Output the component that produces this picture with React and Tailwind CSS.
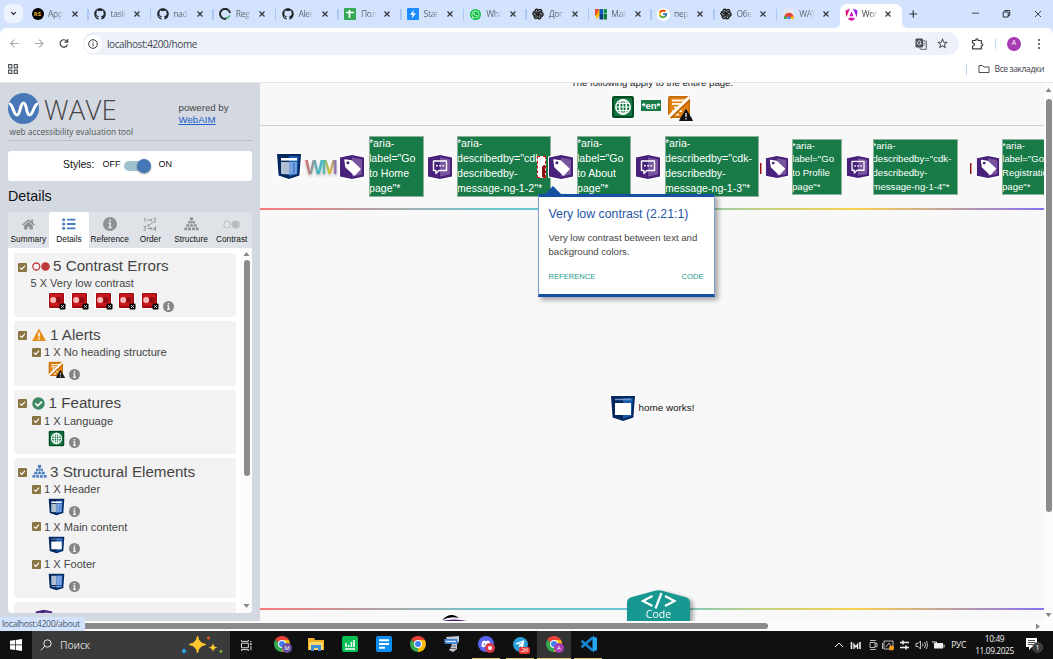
import React from 'react';
import { FaGithub, FaWhatsapp, FaDiscord, FaTelegramPlane, FaHome } from 'react-icons/fa';
import { FcGoogle } from 'react-icons/fc';
import { TbBrandOpenai } from 'react-icons/tb';
import { VscVscode } from 'react-icons/vsc';
import { MdStarBorder } from 'react-icons/md';

const SEGOE = "font-['Open_Sans','Noto_Sans',sans-serif]";

/* ---------- favicons ---------- */
const Rs = () => (
  <span className="flex h-[12px] w-[12px] items-center justify-center rounded-full bg-black text-[6px] font-bold text-[#f2b632]">RS</span>
);
const GitCheck = () => (
  <svg viewBox="0 0 12 12" className="h-[12px] w-[12px]">
    <path d="M7 10.800A5 5 0 1 1 11 5" fill="none" stroke="#24292f" strokeWidth="2" />
    <path d="M6.500 9l1.500 1.500 3-3" fill="none" stroke="#3fb06b" strokeWidth="1.400" />
  </svg>
);
const Sheets = () => (
  <svg viewBox="0 0 12 12" className="h-[12px] w-[12px]">
    <rect width="12" height="12" rx="1" fill="#34a853" />
    <path d="M2 4.500h8M5.500 2v8" stroke="#fff" strokeWidth="1.700" />
  </svg>
);
const Bolt = () => (
  <svg viewBox="0 0 12 12" className="h-[12px] w-[12px]">
    <rect width="12" height="12" rx="1" fill="#1a8cff" />
    <path d="M7 1.800L3 6.800h2.600L4.800 10.400 9 5.300H6.200z" fill="#fff" />
  </svg>
);
const Whats = () => (
  <span className="flex h-[11px] w-[11px] items-center justify-center rounded-full bg-[#0bc144] text-[9px] text-white"><FaWhatsapp /></span>
);
const Mat = () => (
  <svg viewBox="0 0 12 12" className="h-[12px] w-[12px]">
    <path d="M0 1h4l-1 5-3 2z" fill="#f04a2a" />
    <path d="M5 1v6l-4 4.500 0-4z" fill="#fbbc04" />
    <rect x="4.500" y="1" width="3.500" height="5" fill="#1557c0" /><rect x="8.500" y="1" width="3.500" height="4.500" rx="1" fill="#129447" />
    <rect x="4.500" y="6" width="3.500" height="5.500" fill="#103e85" /><rect x="8.500" y="6" width="3.500" height="5.500" fill="#0d7a3a" />
  </svg>
);
const Google = () => (
  <span className="flex h-[13px] w-[13px] items-center justify-center rounded-full bg-white text-[10px]"><FcGoogle /></span>
);
const Store = () => (
  <svg viewBox="0 0 12 12" className="h-[12px] w-[12px]">
    <rect x="1" y="0.500" width="10" height="10.500" rx="1" fill="#e6e8ec" />
    <path d="M1.500 9a4.500 4 0 0 1 9-0.500L8 10z" fill="#ea4335" />
    <path d="M1 11V8l3 1v2z" fill="#34a853" />
    <path d="M8 8.500h3V11H7z" fill="#fbbc04" />
    <circle cx="6" cy="9.800" r="1.500" fill="#4285f4" />
  </svg>
);
const Angular = () => (
  <svg viewBox="0 0 12 12" className="h-[13px] w-[13px]">
    <defs>
      <linearGradient id="ang" x1="0" y1="0.600" x2="1" y2="0.200">
        <stop offset="0" stopColor="#f0104c" />
        <stop offset="0.500" stopColor="#d516c4" />
        <stop offset="1" stopColor="#7a1cff" />
      </linearGradient>
    </defs>
    <path d="M7.300 0.500l4.200 1.800-.6 6.300zM4.700 0.500L.5 2.300l.6 6.300zM9 10.300L6 12l-3-1.700.6-1.400h4.800zM6 3l1.900 4.700H4.100z" fill="url(#ang)" />
  </svg>
);
const Gh = () => <FaGithub className="h-[12px] w-[12px] text-[#24292f]" />;
const Ai = () => <TbBrandOpenai strokeWidth="2.800" className="h-[12px] w-[12px] text-[#222]" />;

const TABS = [
  [Rs, 'App'], [Gh, 'task'], [Gh, 'nad'], [GitCheck, 'Reg'], [Gh, 'Aler'], [Sheets, 'Пол'], [Bolt, 'Stat'],
  [Whats, 'Wha'], [Ai, 'Дог'], [Mat, 'Mat'], [Google, 'пер'], [Ai, 'Обе'], [Store, 'WAV'], [Angular, 'Wor'],
];

const Cross = ({ className }) => (
  <svg viewBox="0 0 8 8" className={className}><path d="M1.500 1.500l5 5M6.500 1.500l-5 5" stroke="currentColor" strokeWidth="1.200" /></svg>
);

function Tab({ Icon, label, active, last }) {
  return (
    <div className={`relative flex h-[24px] w-[62.6px] shrink-0 items-center pb-[4px] ${active ? 'rounded-t-[7px] bg-white' : ''}`}>
      {active && (
        <svg viewBox="0 0 74 6" className="absolute -left-[6px] bottom-0 h-[6px] w-[74.600px]" preserveAspectRatio="none">
          <path d="M0 6Q6 6 6 0V6zM74 6Q68 6 68 0V6z" fill="#fff" />
        </svg>
      )}
      <span className="ml-[5px] flex w-[13px] justify-center"><Icon /></span>
      <span className={`ml-[4px] w-[15px] overflow-hidden whitespace-nowrap text-[8.500px] tracking-[-0.300px] text-[#41454c] ${active ? '' : 'opacity-80'} [mask-image:linear-gradient(to_right,black_55%,transparent_105%)]`}>{label}</span>
      <Cross className="ml-[7.500px] h-[8px] w-[8px] text-[#30343a]" />
      {!active && !last && <span className="ml-auto h-[11px] w-[1.500px] bg-[#a9c7f5]" />}
    </div>
  );
}

function Browser() {
  return (
    <div className={`${SEGOE} h-[83px] shrink-0 bg-[#d3e3fd]`}>
      <div className="flex h-[28px] items-end">
        <div className="mb-[5px] ml-[4px] flex h-[19px] w-[19px] items-center justify-center rounded-[6px] bg-[#ecf2fe]">
          <svg viewBox="0 0 8 8" className="h-[7px] w-[7px]"><path d="M1.500 2.500L4 5l2.500-2.500" fill="none" stroke="#222" strokeWidth="1.400" /></svg>
        </div>
        <div className="ml-[3px] flex">
          {TABS.map(([I, l], i) => <Tab key={i} Icon={I} label={l} active={i === 13} last={i === 12} />)}
        </div>
        <svg viewBox="0 0 140 28" className="h-[28px] w-[140px]" fill="none" stroke="#30343a">
          <path d="M7.500 14h7.500M11.200 10.200v7.500" strokeWidth="1.100" />
          <path d="M70 13.200h7" strokeWidth="0.900" />
          <path d="M101.200 12h5v5h-5zM102.700 12v-1.500h5v5H106" strokeWidth="1" />
          <path d="M133 11l6 6M139 11l-6 6" strokeWidth="0.900" />
        </svg>
      </div>
      <div className="h-[55px] rounded-t-[6px] border-b border-[#e4e6e9] bg-white">
        <div className="flex h-[31px] items-center">
          <svg viewBox="0 0 83 31" className="h-[31px] w-[83px]" fill="none">
            <path d="M18.800 15.500h-7.800M14.400 11.700l-3.800 3.800 3.800 3.800" stroke="#a5a8ac" strokeWidth="1.100" />
            <path d="M35 15.500h7.800M39.200 11.700l3.800 3.800-3.800 3.800" stroke="#a5a8ac" strokeWidth="1.100" />
            <path d="M66.800 13.200a3.700 3.700 0 1 0 .6 3.300M67.700 11v3.200h-3.200" stroke="#3c4043" strokeWidth="1.200" />
          </svg>
          <div className="flex h-[23px] w-[876px] items-center rounded-full bg-[#ecf1fa] pl-[1px]">
            <span className="flex h-[18px] w-[18px] items-center justify-center rounded-full bg-white">
              <svg viewBox="0 0 10 10" className="h-[10px] w-[10px]" fill="none" stroke="#33373c"><circle cx="5" cy="5" r="4.300" /><path d="M5 4.500v2.700M5 2.600v1.100" /></svg>
            </span>
            <span className="ml-[5px] mt-px text-[10px] tracking-[-0.430px] text-[#45494f]">localhost:4200/home</span>
            <svg viewBox="0 0 12 12" className="ml-auto h-[12px] w-[12px]">
              <rect x="0.500" y="0.500" width="7.500" height="9" rx="1" fill="#4a4e54" />
              <path d="M8 3h3.300v8.300H5.500L4.500 9.500" fill="none" stroke="#5f6368" />
              <path d="M6 3.800A2 2 0 1 0 6 6V5H4.500" fill="none" stroke="#fff" strokeWidth="0.800" />
              <path d="M7.500 5.500h3M9 4.500v1M10 5.500L7.500 8.500M8 6.500l2 2" fill="none" stroke="#777" strokeWidth="0.700" />
            </svg>
            <MdStarBorder className="ml-[9px] mr-[10px] h-[13px] w-[13px] text-[#3c4043]" />
          </div>
          <svg viewBox="0 0 13 13" className="ml-[12px] h-[13px] w-[13px]" fill="none" stroke="#3c4043" strokeWidth="1.200"><path d="M1.500 3.500h3.200V3a1.200 1.200 0 0 1 2.400 0v.5h3.200v3h.3a1.200 1.200 0 0 1 0 2.400h-.3v3h-8.800V9.200q2-.2 2-1.700t-2-1.700z" /></svg>
          <span className="ml-[11px] h-[11px] w-px bg-[#c5dafb]" />
          <span className="ml-[11px] flex h-[14px] w-[14px] items-center justify-center rounded-full bg-[#a63cb4] text-[7px] text-white">A</span>
          <svg viewBox="0 0 4 12" className="ml-[16px] h-[12px] w-[4px]" fill="#3c4043"><circle cx="2" cy="2" r="1" /><circle cx="2" cy="6" r="1" /><circle cx="2" cy="10" r="1" /></svg>
        </div>
        <div className="flex h-[20px] items-center">
          <svg viewBox="0 0 10 10" className="ml-[8px] h-[10px] w-[10px]" fill="none" stroke="#55595e" strokeWidth="1.200"><path d="M.6.6h3.200v3.200H.6zM6.200.6h3.200v3.200H6.200zM.6 6.200h3.200v3.200H.6zM6.200 6.200h3.200v3.200H6.200z" /></svg>
          <span className="ml-auto h-[11px] w-px bg-[#bdd4fa]" />
          <svg viewBox="0 0 12 10" className="ml-[11px] h-[10px] w-[12px]" fill="none" stroke="#4a4e54"><path d="M1 8.500v-7h3.500L6 3h5v5.500z" /></svg>
          <span className="ml-[5px] mr-[9px] text-[8.600px] tracking-[-0.430px] text-[#3f4349]">Все закладки</span>
        </div>
      </div>
    </div>
  );
}

/* ---------- WAVE icons ---------- */
const Check = () => (
  <svg viewBox="0 0 9 9" className="h-[9px] w-[9px] shrink-0"><rect width="9" height="9" rx="1" fill="#8a7543" /><path d="M2 4.600l1.800 1.800L7 2.700" fill="none" stroke="#fff" strokeWidth="1.200" /></svg>
);
const Info = ({ className }) => (
  <svg viewBox="0 0 12 12" className={`shrink-0 ${className}`}><circle cx="6" cy="6" r="6" fill="#858585" /><path d="M6 2.200v1.700M4.700 5.300H6V9M4.500 9h3" stroke="#f2f2f2" strokeWidth="1.500" fill="none" /></svg>
);
const ContrastIcon = () => (
  <svg viewBox="0 0 18 18" className="h-[18px] w-[18px] shrink-0">
    <rect width="17" height="17" rx="2" fill="#fff" /><rect x="1" y="1" width="15" height="15" rx="1" fill="#9e0b0f" /><rect x="2" y="2" width="12.500" height="12" fill="#c9171e" />
    <circle cx="10.500" cy="8" r="3" fill="#8f0d12" /><circle cx="5.200" cy="8" r="3" fill="#fbb9bb" />
    <rect x="11.500" y="11.500" width="6" height="6" rx="1" fill="#000" /><path d="M13.200 13.200l2.600 2.600M15.800 13.200l-2.600 2.600" stroke="#fff" strokeWidth="0.900" />
  </svg>
);
const HeadingIcon = ({ className }) => (
  <svg viewBox="0 0 26 26" className={`shrink-0 ${className}`}>
    <rect width="24" height="24" rx="3" fill="#fff" /><rect x="1" y="1" width="22" height="22" rx="2" fill="#c46a04" /><rect x="2.500" y="2.500" width="19" height="19" fill="#e08214" />
    <path d="M5 5.500h13M5 9h10M7 12.500h9M5 16h10M4 19.500h8" stroke="#fff3e0" strokeWidth="2.200" /><path d="M3 22L22 4" stroke="#c46a04" strokeWidth="4.500" /><path d="M1 22.500L22.500 2" stroke="#fff" strokeWidth="2.800" />
    <path d="M19 14.500L25.500 25.500h-13z" fill="#111" stroke="#111" strokeLinejoin="round" /><path d="M19 18v4M19 23v1.500" stroke="#fff" strokeWidth="1.200" />
  </svg>
);
const Globe = ({ className }) => (
  <svg viewBox="0 0 24 24" className={`shrink-0 ${className}`}>
    <rect width="24" height="24" rx="3" fill="#fff" /><rect x="1" y="1" width="22" height="22" rx="2" fill="#004d25" /><rect x="3" y="3" width="18" height="18" rx="1" fill="#12753f" />
    <g fill="none" stroke="#fff" strokeWidth="1.500"><circle cx="12" cy="12" r="7.200" /><ellipse cx="12" cy="12" rx="3.500" ry="7.200" /><path d="M12 5v14M5 12h14M6 8.500h12M6 15.500h12" strokeWidth="1.100" /></g>
  </svg>
);
const Shield = ({ type, className }) => (
  <svg viewBox="0 0 26 27" className={`shrink-0 ${className}`}>
    <path d="M0 0h26l-1.500 23.500L13 27 1.500 23.500z" fill="#fff" />
    <path d="M1 1h24l-1.600 21.600L13 26 2.600 22.600z" fill="#03265d" /><path d="M13 3h9.800l-1.400 18L13 23.800z" fill="#1b5dad" />
    {type === 'header' && <><path d="M5 5h16v2.600H5z" fill="#fff" /><path d="M5 9h8v12.500L5 21z" fill="#b1bfd3" /><path d="M13 9h7.800v12L13 21.500z" fill="#79a3e0" /><path d="M17 10h2v10h-2z" fill="#4d86d4" /></>}
    {type === 'main' && <><path d="M5 4.500h16" stroke="#6f94c6" strokeWidth="1.500" /><path d="M5 8h16v12H5z" fill="#fff" /></>}
    {type === 'footer' && <><path d="M5 4h8v14H5z" fill="#b1bfd3" /><path d="M13 4h8v14h-8z" fill="#79a3e0" /><path d="M5.500 20.500h15" stroke="#a9bcd8" strokeWidth="1.200" /></>}
  </svg>
);
const Hex = ({ kind, className }) => (
  <svg viewBox="0 0 26 26" className={`relative shrink-0 ${className}`}>
    <path d="M0 2.500L13 0l13 2.500v21L13 26 0 23.500z" fill="#fff" /><path d="M1 3.500L13 1l12 2.500v19L13 25 1 22.500z" fill="#48217a" /><path d="M13 3.500l10 2v15l-10 2z" fill="#7a559f" />
    {kind === 'tag'
      ? <><path d="M6 6l6.500 1 8.500 8-5.500 6L7 13z" fill="#fff" stroke="#fff" strokeWidth="1.500" strokeLinejoin="round" /><circle cx="8.900" cy="8.800" r="1.500" fill="#48217a" /></>
      : <><path d="M6.500 7h13v9.500H12l-3 3v-3H6.500z" fill="none" stroke="#fff" strokeWidth="1.400" strokeLinejoin="round" /><path d="M9 11.800h1.700M12.200 11.800h1.700M15.400 11.800h1.700" stroke="#fff" strokeWidth="1.600" /></>}
  </svg>
);
const Tree = ({ className }) => (
  <svg viewBox="0 0 16 14" className={`shrink-0 ${className}`}>
    <path d="M8 2v3M4.500 8l1.500-3h4l1.500 3M2 12l2-4M6.500 12L4.500 8M9.500 12l2-4M14 12l-2-4M8 5v3" stroke="currentColor" strokeWidth="0.700" fill="none" />
    <g fill="currentColor"><rect x="6.300" y="0" width="3.400" height="3" /><rect x="4.300" y="4" width="2.800" height="2.200" /><rect x="8.900" y="4" width="2.800" height="2.200" /><rect x="2.500" y="7.300" width="3" height="2.500" /><rect x="6.500" y="7.300" width="3" height="2.500" /><rect x="10.500" y="7.300" width="3" height="2.500" /><rect x="0.300" y="11" width="3.200" height="2.600" /><rect x="4.500" y="11" width="3" height="2.600" /><rect x="8.500" y="11" width="3" height="2.600" /><rect x="12.500" y="11" width="3.200" height="2.600" /></g>
  </svg>
);

/* ---------- sidebar ---------- */
const NAV = [
  ['Summary', <FaHome className="h-[13px] w-[13px]" />],
  ['Details', <svg viewBox="0 0 14 12" className="h-[12px] w-[14px] text-[#4a7cc0]" fill="currentColor"><circle cx="1.700" cy="1.700" r="1.500" /><circle cx="1.700" cy="6" r="1.500" /><circle cx="1.700" cy="10.300" r="1.500" /><path d="M5 .8h8.500v1.800H5zM5 5.100h8.500v1.800H5zM5 9.400h8.500v1.800H5z" /></svg>],
  ['Reference', <svg viewBox="0 0 12 12" className="h-[14px] w-[14px]"><circle cx="6" cy="6" r="6" fill="currentColor" /><path d="M6 2.200v1.600M4.800 5.200H6V9M4.600 9h3" stroke="#dfe3e8" strokeWidth="1.400" fill="none" /></svg>],
  ['Order', <svg viewBox="0 0 14 14" className="h-[14px] w-[14px]" fill="none" stroke="currentColor" strokeWidth="0.900"><path d="M1 1.500L2 1v4M4 3h5M7.500 1.500L9 3 7.500 4.500M10.500 1.300h2.300v1L10.500 5H13M10 5.500L5 9M5 7v2h2M.5 9.500H3L1.500 11.500 3 12.500.5 13.500M4.500 11.500H9M7.500 10L9 11.500 7.500 13M12.500 14V9.500l-2.300 3H13" /></svg>],
  ['Structure', <Tree className="h-[14px] w-[15px]" />],
  ['Contrast', <svg viewBox="0 0 17 9" className="h-[9px] w-[17px] text-[#b9bbbf]"><circle cx="4.300" cy="4.500" r="3.500" fill="none" stroke="currentColor" /><circle cx="12.700" cy="4.500" r="4" fill="currentColor" /></svg>],
];

function Card({ icon, title, className, titleClass, children }) {
  return (
    <div className={`shrink-0 rounded-[3px] bg-[#f2f2f2] text-[#454545] ${className}`}>
      <div className="flex h-[27px] items-center pl-[4px]">
        <span className="mt-px"><Check /></span>
        <span className="ml-[5px] flex items-center">{icon}</span>
        <span className={`whitespace-nowrap text-[15.200px] ${titleClass}`}>{title}</span>
      </div>
      {children}
    </div>
  );
}
function Item({ label, children }) {
  return (
    <div className="h-[37.400px]">
      <div className="flex h-[8px] items-center pl-[18px]"><Check /><span className="ml-[3px] whitespace-nowrap text-[11.100px]">{label}</span></div>
      <div className="flex h-[24px] items-start pl-[34px] pt-[5px]">{children}<Info className="ml-[4px] mt-[7.500px] h-[11px] w-[11px]" /></div>
    </div>
  );
}

function Sidebar() {
  return (
    <div className="flex h-full w-[260px] shrink-0 flex-col overflow-hidden bg-[#d4d9e1] px-[8px]">
      <div className="flex h-[57.500px] shrink-0 justify-between border-b border-[#b9bdc4]">
        <div className="pt-[10px]">
          <div className="flex h-[31px] items-center">
            <svg viewBox="0 0 31 31" className="h-[31px] w-[31px]"><circle cx="15.500" cy="15.500" r="15.500" fill="#4878b8" /><path d="M1 11c4-1 4 11 8 11 3.500 0 3-12 6.500-12S18 22 21.500 22c4 0 4.500-12 8.500-11" fill="none" stroke="#fff" strokeWidth="3" /></svg>
            <span className="ml-[5px] mt-[2px] font-['Open_Sans',sans-serif] text-[27.500px] font-light leading-none tracking-[0.200px] text-[#454545]">WAVE</span>
          </div>
          <div className="ml-[1.500px] mt-[2px] whitespace-nowrap font-['Open_Sans',sans-serif] text-[8.300px] leading-[12px] text-[#555]">web accessibility evaluation tool</div>
        </div>
        <div className="w-[73.500px] whitespace-nowrap pt-[19px] text-[9.700px] leading-[11.500px] text-[#444]">powered by<br /><span className="text-[#2060c8] underline">WebAIM</span></div>
      </div>
      <div className="mt-[10.500px] flex h-[30px] shrink-0 items-center rounded-[3px] bg-white pb-[2px] text-[#111]">
        <span className="ml-[55px] text-[10.500px]">Styles:</span>
        <span className="ml-[8px] text-[9px]">OFF</span>
        <span className="ml-[3px] mt-[2px] flex h-[10px] w-[27px] items-center justify-end rounded-full bg-[#9fc2cd]"><span className="h-[13.500px] w-[13.500px] rounded-full bg-[#4576b5] shadow-[0_1px_2px_rgba(0,0,0,.4)]" /></span>
        <span className="ml-[8px] text-[9px]">ON</span>
      </div>
      <div className="h-[31px] shrink-0 pt-[4px] text-[14.300px] leading-[22px] text-[#111]">Details</div>
      <div className="flex h-[36px] shrink-0 overflow-hidden rounded-t-[4px] bg-[#dfe3e8]">
        {NAV.map(([l, ic], i) => (
          <div key={l} className={`flex flex-1 flex-col items-center text-[#8f9193] ${i === 1 ? 'rounded-t-[3px] bg-white' : ''}`}>
            <span className="flex h-[22px] items-center pt-[2px]">{ic}</span>
            <span className="text-[8.300px] leading-[11px] text-[#111]">{l}</span>
          </div>
        ))}
      </div>
      <div className="flex h-[365px] shrink-0 overflow-hidden rounded-b-[4px] bg-white">
        <div className="flex w-[228px] flex-col gap-[4.200px] pl-[6px] pt-[5px]">
          <Card className="h-[64.300px]" title="5 Contrast Errors" titleClass="ml-[3px]" icon={<svg viewBox="0 0 18 9" className="h-[9px] w-[18px]"><circle cx="4.300" cy="4.500" r="3.500" fill="none" stroke="#c03a3a" strokeWidth="1.300" /><circle cx="13.500" cy="4.500" r="4.300" fill="#c03a3a" /></svg>}>
            <div className="h-[8px] whitespace-nowrap pl-[16.500px] text-[11px] leading-[7px]">5 X Very low contrast</div>
            <div className="flex gap-[5.300px] pl-[34px] pt-[4px]">{[0, 1, 2, 3, 4].map((i) => <ContrastIcon key={i} />)}<Info className="-ml-[1px] mt-[8.500px] h-[11px] w-[11px]" /></div>
          </Card>
          <Card className="h-[64.300px]" title="1 Alerts" titleClass="ml-[4px]" icon={<svg viewBox="0 0 14 13" className="h-[13px] w-[14px]"><path d="M7 .5L14 13H0z" fill="#e8901e" /><path d="M7 4.500v4M7 9.800v1.600" stroke="#fff" strokeWidth="1.500" /></svg>}>
            <Item label="1 X No heading structure"><HeadingIcon className="h-[17px] w-[17px]" /></Item>
          </Card>
          <Card className="h-[64.300px]" title="1 Features" titleClass="ml-[3.500px]" icon={<svg viewBox="0 0 14 14" className="h-[13px] w-[13px]"><circle cx="7" cy="7" r="6.700" fill="#3f8a62" /><path d="M3.500 6.800l2.700 2.700 4.500-4.500" fill="none" stroke="#fff" strokeWidth="1.700" /></svg>}>
            <Item label="1 X Language"><Globe className="h-[17px] w-[17px]" /></Item>
          </Card>
          <Card className="h-[139.300px]" title="3 Structural Elements" titleClass="ml-[3px]" icon={<Tree className="h-[13px] w-[15px] text-[#4a7cc0]" />}>
            <Item label="1 X Header"><Shield type="header" className="h-[18px] w-[17px]" /></Item>
            <Item label="1 X Main content"><Shield type="main" className="h-[18px] w-[17px]" /></Item>
            <Item label="1 X Footer"><Shield type="footer" className="h-[18px] w-[17px]" /></Item>
          </Card>
          <div className="h-[20px] shrink-0 rounded-[3px] bg-[#f2f2f2] pl-[21px] pt-[7px]"><Hex kind="tag" className="h-[18px] w-[18px]" /></div>
        </div>
        <div className="ml-[5px] flex w-[11px] flex-col items-center bg-[#fcfcfc] pt-[4px]">
          <svg viewBox="0 0 6 4" className="h-[4px] w-[7px]"><path d="M3 0l3 4H0z" fill="#888" /></svg>
          <span className="mt-[4px] h-[216px] w-[6px] rounded-full bg-[#8b8b8b]" />
          <svg viewBox="0 0 6 4" className="mb-[5px] mt-auto h-[4px] w-[7px]"><path d="M3 4l3-4H0z" fill="#888" /></svg>
        </div>
      </div>
    </div>
  );
}

/* ---------- page ---------- */
const Note = ({ lines, small, className }) => (
  <div className={`shrink-0 whitespace-pre bg-[#177a47] text-white outline outline-[#8ab59c] -outline-offset-1 ${small ? 'h-[56px] text-[9.600px] leading-[13.800px]' : 'h-[61px] text-[10.600px] leading-[15.100px]'} ${className}`}>
    {lines.map((l) => <div key={l}>{l}</div>)}
  </div>
);
const RED = 'shrink-0 border-r border-[#d88] bg-[#8d1015]';
const RAINBOW = 'bg-[linear-gradient(to_right,#ff5a5a_0%,#45c0c8_30%,#3fb8c8_50%,#b6c766_64%,#f9c722_76%,#6a50f0_100%)]';

function Page() {
  return (
    <div className="relative flex h-full min-w-0 flex-1 flex-col overflow-hidden bg-[#f8f8f8]">
      <div className="flex h-[42.500px] shrink-0 flex-col items-center border-b border-[#cfcfcf]">
        <div className="-mt-[6px] h-[12px] whitespace-nowrap text-[9.600px] leading-[12px] text-[#222]">The following apply to the entire page.</div>
        <div className="mt-[6px] flex items-start">
          <Globe className="h-[24px] w-[24px]" />
          <span className="ml-[6px] mt-[5px] h-[11px] w-[20px] bg-[#177a47] text-center text-[9.500px] font-bold leading-[11px] text-white">*en*</span>
          <HeadingIcon className="ml-[6px] h-[26px] w-[26px]" />
        </div>
      </div>
      <div className="flex h-[82px] shrink-0 items-center text-[#111]">
        <Shield type="header" className="ml-[16px] h-[27px] w-[26px]" />
        <span className="relative ml-[3px] w-[33px] shrink-0 drop-shadow-[0_2px_1px_rgba(0,0,0,.2)]">
          <span className="block bg-[linear-gradient(to_right,#e56a6a,#45b8c4_40%,#48b8c0_55%,#e0c020_75%,#6a50f0)] bg-clip-text text-[19.500px] font-bold leading-[22px] tracking-[-1.800px] text-transparent">WM</span>
        </span>
        <Hex kind="tag" className="ml-[1px] h-[26px] w-[26px]" />
        <Note className="ml-[4px] w-[54.500px]" lines={['*aria-', 'label="Go', 'to Home', 'page"*']} />
        <Hex kind="chat" className="ml-[3.500px] h-[26px] w-[26px]" />
        <Note className="ml-[4px] w-[93.500px]" lines={['*aria-', 'describedby="cdk-', 'describedby-', 'message-ng-1-2"*']} />
        <span className="relative -ml-[14px] flex h-[22px] w-[9px] shrink-0 justify-end border border-dashed border-[#e11] bg-white"><span className="mt-[8px] w-[3px] rounded-tl-[3px] bg-[#8d1015]" /></span>
        <Hex kind="tag" className="ml-[2px] h-[26px] w-[26px]" />
        <Note className="ml-[3.500px] w-[54px]" lines={['*aria-', 'label="Go', 'to About', 'page"*']} />
        <Hex kind="chat" className="ml-[4px] h-[26px] w-[26px]" />
        <Note className="ml-[4px] w-[93.500px]" lines={['*aria-', 'describedby="cdk-', 'describedby-', 'message-ng-1-3"*']} />
        <span className={`${RED} ml-[1px] mt-[3px] h-[11px] w-[2px]`} />
        <Hex kind="tag" className="ml-[3px] h-[24px] w-[24px]" />
        <Note small className="ml-[3.500px] w-[50px]" lines={['*aria-', 'label="Go', 'to Profile', 'page"*']} />
        <Hex kind="chat" className="ml-[3.500px] h-[24px] w-[24px]" />
        <Note small className="ml-[3px] w-[85.500px]" lines={['*aria-', 'describedby="cdk-', 'describedby-', 'message-ng-1-4"*']} />
        <span className={`${RED} ml-[11.500px] mt-[3px] h-[11px] w-[2px]`} />
        <Hex kind="tag" className="ml-[4px] h-[24px] w-[24px]" />
        <Note small className="ml-[2.500px] w-[60px]" lines={['*aria-', 'label="Go to', 'Registration', 'page"*']} />
      </div>
      <div className={`h-[2px] shrink-0 opacity-80 ${RAINBOW}`} />
      <div className="flex min-h-0 flex-1 items-center justify-center text-[10px] text-[#111]">
        <Shield type="main" className="h-[27px] w-[26px]" />
        <span className="ml-[3px] text-[9.900px]">home works!</span>
      </div>
      <div className={`h-[2px] shrink-0 opacity-80 ${RAINBOW}`} />
      <div className="h-[11.500px] shrink-0 overflow-hidden pl-[181px] pt-[5px]">
        <svg viewBox="0 0 26 6" className="h-[6px] w-[26px]"><path d="M1 5Q10-4 18 3Q9 1 1 5z" fill="#000" /><path d="M1 6q12-3 25 0z" fill="#48217a" /></svg>
      </div>

      <div className="absolute left-[277.500px] top-[103px] w-[177px]">
        <svg viewBox="0 0 16 8" className="ml-[7px] block h-[8px] w-[16px]"><path d="M8 0l8 8H0z" fill="#1650a3" /></svg>
        <div className="h-[103px] border-x border-y-[3px] border-x-[#7e9fca] border-y-[#1650a3] bg-white px-[10px] pt-[10px] shadow-[3px_3px_5px_rgba(0,0,0,.35)]">
          <div className="whitespace-nowrap text-[12.350px] leading-[15px] text-[#1f55a6]">Very low contrast (2.21:1)</div>
          <div className="mt-[9px] whitespace-nowrap text-[9.600px] leading-[13.500px] text-[#444]">Very low contrast between text and<br />background colors.</div>
          <div className="mt-[12px] flex justify-between text-[7.600px] leading-[14px] text-[#229a8e]"><span>REFERENCE</span><span>CODE</span></div>
        </div>
      </div>

      <div className="absolute bottom-0 left-[367px] h-[31px] w-[63px] drop-shadow-[3px_2px_2px_rgba(0,0,0,.35)]">
        <svg viewBox="0 0 63 31" className="absolute inset-0 h-[31px] w-[63px]"><path d="M0 31V13Q0 8 5 7L27 1Q31.500-.5 36 1L58 7Q63 8 63 13V31z" fill="#189890" /><path d="M25.500 6l-9.500 5 9.500 5M38 6l9.500 5L38 16M34.500 3L28.500 18.500" fill="none" stroke="#fff" strokeWidth="2.200" /></svg>
        <div className="relative pt-[18px] text-center font-['Open_Sans',sans-serif] text-[10.500px] leading-[13px] text-white">Code</div>
      </div>
    </div>
  );
}

/* ---------- taskbar ---------- */
const Chrome = ({ badge }) => (
  <span className="relative">
    <svg viewBox="0 0 16 16" className="h-[16px] w-[16px]"><path d="M8 8L1.100 4A8 8 0 0 1 14.900 4z" fill="#ea4335" /><path d="M8 8l6.900-4A8 8 0 0 1 8 16z" fill="#fbbc04" /><path d="M8 8v8A8 8 0 0 1 1.100 4z" fill="#34a853" /><path d="M8 4h6.900l-3.400 6L8 16z" fill="#fbbc04" /><circle cx="8" cy="8" r="4" fill="#fff" /><circle cx="8" cy="8" r="3" fill="#3f7ff0" /></svg>
    {badge && <span className={`absolute -bottom-px -right-[2px] flex h-[10px] w-[10px] items-center justify-center rounded-full text-[6px] text-white ${badge === 'A' ? 'bg-[#a63cb4]' : 'bg-[#6750a4]'}`}>{badge}</span>}
  </span>
);
const APPS = [
  [<Chrome badge="M" />],
  [<svg viewBox="0 0 16 14" className="h-[14px] w-[16px]"><path d="M0 1h6l1 2h9v10H0z" fill="#f0b429" /><path d="M1 5h14v8H1z" fill="#ffd968" /><path d="M3 8h10v6h-3v-3H6v3H3z" fill="#3a8fd8" /></svg>],
  [<svg viewBox="0 0 16 16" className="h-[16px] w-[16px]"><rect width="16" height="16" rx="2" fill="#0abf53" /><path d="M4 7v4M6.700 9v2M9.400 6v5M12 4v7M3 13h10" stroke="#fff" strokeWidth="1.600" /></svg>],
  [<svg viewBox="0 0 16 16" className="h-[16px] w-[16px]"><rect width="16" height="16" rx="2" fill="#0b8ff5" /><path d="M3 4.300h10M3 8h10M3 11.700h6" stroke="#fff" strokeWidth="2" /></svg>],
  [<Chrome />],
  [<svg viewBox="0 0 16 16" className="h-[16px] w-[16px]"><path d="M2 1l13-1v6l-2 1v6l-4 3-4-2 2-3 1-3-5-1V3z" fill="#c4cad3" /><path d="M0 3h13l1 5H1z" fill="#3c7fd0" /><path d="M1.500 5.500h10.500" stroke="#cfe3fa" strokeWidth="1.500" /><path d="M8 10h4M6 12.500h6" stroke="#666" /></svg>],
  [<span className="relative"><span className="flex h-[16px] w-[16px] items-center justify-center rounded-full bg-[#5865f2] text-[10px] text-white"><FaDiscord /></span><svg viewBox="0 0 10 10" className="absolute -bottom-px -right-px h-[10px] w-[10px]"><circle cx="5" cy="5" r="5" fill="#d93b46" /><circle cx="5" cy="5" r="2" fill="#fff" /></svg></span>, 'u'],
  [<span className="relative"><span className="flex h-[15px] w-[15px] items-center justify-center rounded-full bg-[#2a9fd8] text-[10px] text-white"><FaTelegramPlane /></span><span className="absolute -bottom-[2px] -right-[2px] rounded-[2px] bg-[#e53935] px-px text-[6px] leading-[7px] text-white">.26</span></span>, 'u'],
  [<Chrome badge="A" />, 'a'],
  [<svg viewBox="0 0 17 16" className="h-[16px] w-[17px]"><path d="M12.500 0L17 2v12l-4.500 2z" fill="#27a7f2" /><path d="M12.500 1.800L1.500 11.300M12.500 14.200L1.500 4.700" stroke="#1585cf" strokeWidth="2.600" /></svg>, 'u'],
];

function Taskbar() {
  return (
    <div className={`${SEGOE} flex h-[28px] shrink-0 items-center bg-[#101010] text-[#f0f0f0]`}>
      <svg viewBox="0 0 12 12" className="ml-[10px] h-[12px] w-[12px]" fill="#fff"><path d="M0 1.700L5 1v4.600H0zM5.700.9L12 0v5.600H5.700zM0 6.300h5V11l-5-.7zM5.700 6.300H12V12l-6.300-.9z" /></svg>
      <div className="ml-[10px] flex h-full w-[198px] items-center bg-[#3b3b3b]">
        <svg viewBox="0 0 12 12" className="ml-[8px] h-[12px] w-[12px]" fill="none" stroke="#e8e8e8"><circle cx="7.500" cy="4.500" r="3.700" /><path d="M4.800 7.200L.8 11.200" /></svg>
        <span className="ml-[8px] mt-px text-[10.300px] tracking-[-0.100px] text-[#d8d8d8]">Поиск</span>
        <svg viewBox="0 0 42 20" className="ml-auto mr-[7px] h-[20px] w-[42px]"><path d="M16.500 1q1 7.500 8.500 8.500-7.500 1-8.500 8.500-1-7.500-8.500-8.500 7.500-1 8.500-8.500z" fill="#fcc630" stroke="#fcc630" strokeLinejoin="round" /><path d="M32 8q.5 4 4.500 4.500Q32.500 13 32 17q-.5-4-4.500-4.500Q31.500 12 32 8z" fill="#fcc630" /><path d="M3 12.500q.5 3 3.500 3.500-3 .5-3.500 3.500Q2.500 16.500 0 16q2.500-.5 3-3.500z" fill="#2aa5ec" /><circle cx="27.500" cy="3" r="1.500" fill="#ee5a2a" /><circle cx="40" cy="16.500" r="1.400" fill="#7ab53c" /></svg>
      </div>
      <svg viewBox="0 0 12 12" className="ml-[11px] h-[11px] w-[11px]" fill="none" stroke="#eee"><path d="M.5 0v1.500h7.500V0M.5 12v-1.500H8V12M.5 3.500H8v5H.5zM10.800 1v1.500M10.800 6.500V11" /><path d="M10 4.500h1.600" strokeWidth="1.800" /></svg>
      <div className="ml-[13px] flex h-full">
        {APPS.map(([icon, state], i) => (
          <div key={i} className={`flex h-full w-[34px] flex-col items-center ${state === 'a' ? 'bg-[#343434]' : ''}`}>
            <span className="flex h-[26.500px] items-center justify-center">{icon}</span>
            {state && <span className={`h-[1.500px] bg-[#d5bd72] ${state === 'a' ? 'w-full' : 'w-[28px]'}`} />}
          </div>
        ))}
      </div>
      <svg viewBox="0 0 114 16" className="ml-auto h-[16px] w-[114px]" fill="none" stroke="#eee">
        <path d="M1 10l4-4 4 4" /><path d="M17.500 5v7M26 5v7" strokeWidth="1.600" /><path d="M20 12V7.500l1.800 2.500 1.800-2.500V12" strokeWidth="1.300" />
        <path d="M36 5.500h5v5h-5zM41 7l2-1v4l-2-1M36 3.500h6M36 12.500h6" stroke="#ccc" strokeWidth="0.900" />
        <path d="M50 4h9v8h-9zM52 10l3-4 2 3M48.500 6v6" stroke="#ccc" strokeWidth="0.900" /><circle cx="57.500" cy="11" r="2.500" fill="#f59b1b" stroke="none" />
        <path d="M66 5.500h9M66 10.500h9" strokeWidth="1.600" /><path d="M69 3.500v4M72 8.500v4" strokeWidth="1.600" />
        <path d="M82 6.500h2L86.500 4v8L84 9.500h-2zM88.500 6.500q1 1.500 0 3M90.500 5q2 3 0 6M92.500 4q2 4 0 8" strokeWidth="0.800" />
        <rect x="100.500" y="6.500" width="8" height="4.500" fill="#eee" /><path d="M98 5h4.500v2.500M110 7.500v3" strokeWidth="1" />
      </svg>
      <span className="ml-[3px] text-[8.500px] tracking-[-0.300px]">РУС</span>
      <div className="ml-[9px] w-[39px] whitespace-nowrap text-center text-[8.300px] leading-[12.500px] tracking-[-0.380px]">10:49<br />11.09.2025</div>
      <span className="relative ml-[12px] mr-[10px] flex h-[16px] w-[17px]">
        <svg viewBox="0 0 17 16" className="h-[16px] w-[17px]"><path d="M0 1h11v9H6l-3 3v-3H0z" fill="#fff" /><path d="M2 3.500h7M2 5.500h7M2 7.500h5" stroke="#222" strokeWidth="0.800" /><circle cx="11.500" cy="10.500" r="5" fill="#3a3a3a" stroke="#777" strokeWidth="0.500" /></svg>
        <span className="absolute bottom-[1px] right-[1px] w-[9px] text-center text-[8px] leading-[10px]">1</span>
      </span>
    </div>
  );
}

export default function App() {
  return (
    <div className="relative flex h-[659px] w-[1053px] flex-col overflow-hidden bg-white font-['Liberation_Sans',Arial,sans-serif]">
      <Browser />
      <div className="flex h-[538px] shrink-0">
        <Sidebar />
        <Page />
        <div className="flex w-[9px] shrink-0 flex-col items-center bg-[#fcfcfc] pt-[5px]">
          <svg viewBox="0 0 6 4" className="h-[4px] w-[7px]"><path d="M3 0l3 4H0z" fill="#888" /></svg>
          <span className="mt-[7px] h-[413px] w-[6px] rounded-full bg-[#8b8b8b]" />
          <svg viewBox="0 0 6 4" className="mb-[4px] mt-auto h-[4px] w-[7px]"><path d="M3 4l3-4H0z" fill="#888" /></svg>
        </div>
      </div>
      <div className="flex h-[10px] shrink-0 items-center bg-[#fcfcfc]">
        <span className="ml-[70px] h-[6px] w-[698px] rounded-full bg-[#8b8b8b]" />
        <svg viewBox="0 0 4 6" className="ml-auto mr-[13px] h-[7px] w-[4px]"><path d="M0 0l4 3-4 3z" fill="#888" /></svg>
      </div>
      <Taskbar />
      <div className={`${SEGOE} absolute left-0 top-[617px] h-[14px] w-[84.500px] whitespace-nowrap rounded-tr-[3px] bg-[#d3e3fd] pl-[2px] text-[8.700px] leading-[14px] tracking-[-0.380px] text-[#4a5568]`}>localhost:4200/about</div>
    </div>
  );
}
